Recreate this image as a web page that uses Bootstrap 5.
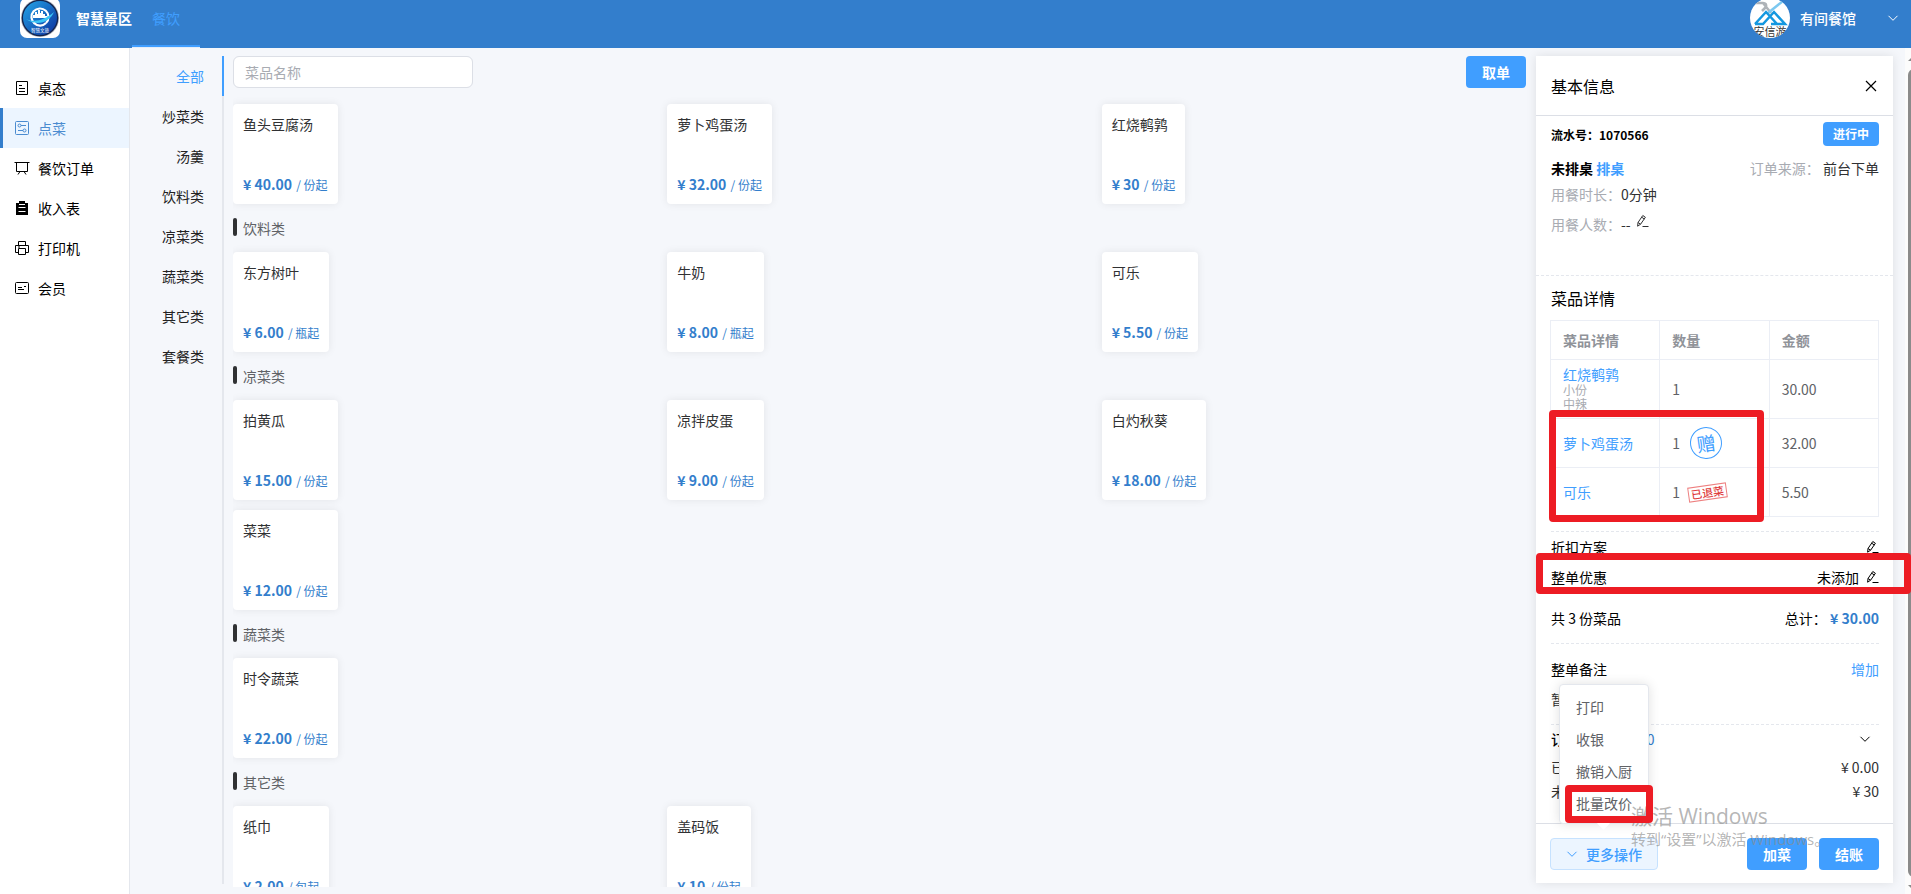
<!DOCTYPE html>
<html lang="zh-CN">
<head>
<meta charset="utf-8">
<meta name="viewport" content="width=device-width, initial-scale=1">
<title>智慧景区 - 点菜</title>
<link href="https://cdn.jsdelivr.net/npm/bootstrap@5.3.0/dist/css/bootstrap.min.css" rel="stylesheet">
<style>
  :root { --brand:#337ecc; --accent:#409eff; --line:#e4e7ed; }
  body { font-family:"Noto Sans CJK SC",sans-serif; font-size:14px; line-height:20px; color:#000; background:#f5f7fb; }
  a { text-decoration:none; color:var(--accent); }
  .topbar { height:48px; background:var(--brand); color:#fff; }
  .topbar-inner { height:36px; }
  .logo { width:40px; height:40px; flex-shrink:0; }
  .shop-name { margin:0 31px 0 10px; }
  .tab-link { width:68px; height:47px; padding-top:8px; border-bottom:2px solid var(--accent); box-shadow:0 1px #e4edf8; color:var(--accent); text-align:center; }
  .workspace { min-height:0; }
  .side { width:130px; background:#fff; border-right:1px solid var(--line); padding-top:20px; }
  .side a { height:40px; color:#000; border-left:3px solid transparent; padding-left:11px; gap:8px; }
  .side a.on { background:#ecf5ff; border-color:var(--brand); color:#4a8bd0; }
  .side svg { width:16px; height:16px; }
  .cats { width:94px; margin:8px 0 10px; border-right:2px solid var(--line); }
  .cats a { height:40px; padding-right:18px; color:#222; }
  .cats a.on { color:var(--accent); border-right:2px solid var(--accent); margin-right:-2px; }
  .menu-area { padding:8px 0 0 9px; min-height:0; }
  .search { width:240px; height:32px; font-size:14px; border-color:#dcdfe6; padding:0 11px; }
  .search::placeholder { color:#a8abb2; }
  .btn-main { background:var(--accent); color:#fff; font-weight:700; font-size:14px; line-height:20px; height:32px; width:60px; padding:0; border:0; border-radius:4px; }
  .dish-grid { display:grid; grid-template-columns:repeat(3,1fr); gap:10px; justify-items:start; }
  .dish { height:100px; padding:10px 10px 9px; background:#fff; border-radius:4px; box-shadow:0 0 8px rgba(0,0,0,.08); color:#303133; }
  .price { color:var(--brand); font-weight:700; }
  .price span { font-size:12px; font-weight:400; margin-left:1px; }
  .dishes { overflow:hidden; padding-top:16px; margin-bottom:7px; }
  .group-title { height:48px; font-size:14px; color:#606266; padding-top:14px; gap:6px; margin:0; font-weight:400; line-height:20px; }
  .group-title::before { content:""; width:4px; height:18px; border-radius:2px; background:#303133; }
  .panel { width:357px; margin:8px 12px 11px 10px; background:#fff; box-shadow:0 0 10px rgba(0,0,0,.1); }
  .panel-head { height:60px; padding:0 15px; border-bottom:1px solid #dcdfe6; }
  .panel-title { font-size:16px; font-weight:400; line-height:24px; margin:0; }
  .dish-title { padding:10px 0; }
  .sect { padding:0 14px 0 15px; }
  .basic { height:160px; padding-top:6px; border-bottom:1px dashed var(--line); color:#303133; }
  .serial { font-size:12px; color:#000; padding-top:2px; }
  .state { width:56px; height:24px; font-size:12px; line-height:24px; background:var(--accent); color:#fff; border-radius:4px; text-align:center; font-weight:700; }
  .source-line { margin-top:12px; }
  .time-line { margin-top:6px; }
  .people-line { margin-top:10px; }
  .muted { color:#a8abb2; }
  .dashed { border-bottom:1px dashed var(--line); }
  .order-wrap { margin-left:-1px; }
  .order-table { width:100%; table-layout:fixed; color:#606266; border-collapse:collapse; height:197px; }
  .order-table th,.order-table td { border:1px solid #ebeef5; padding:0 12px; vertical-align:middle; }
  .order-table th { color:#909399; height:39px; }
  .order-table tbody tr { height:49px; }
  .order-table tbody tr:first-child { height:59px; }
  .order-table .with-spec { padding-bottom:3px; }
  .spec { font-size:12px; line-height:14px; color:#a8abb2; }
  .with-spec a { display:block; line-height:18px; }
  .gift { width:32px; height:32px; margin-left:10px; border:1px solid var(--accent); border-radius:50%; color:var(--accent); font-size:19px; line-height:30px; text-align:center; transform:rotate(-8deg); }
  .returned { margin-left:8px; border:1px solid #ee8080; color:#e03c3c; font-size:11px; font-weight:500; line-height:13px; padding:0 2px; transform:rotate(-8deg); }
  .after-table { height:15px; }
  .row30 { height:30px; }
  .unset { gap:6px; }
  .total-row { height:52px; }
  .note-block { height:81px; padding-top:15px; }
  .note-text { padding-top:10px; color:#303133; }
  .amount { gap:7px; }
  .redbox { position:absolute; border:7px solid #ed1c24; border-radius:4px; z-index:11; pointer-events:none; }
  .redbox.rows { inset:90px 115px -5px -1px; }
  .redbox.discount { inset:-9px -32px -2px -15px; }
  .redbox.reprice { inset:-2px -5px -4px 5px; }
  .panel-foot { height:60px; padding:0 14px; border-top:1px solid #dcdfe6; }
  .btn-more { width:108px; height:32px; padding:0; font-size:14px; line-height:20px; color:var(--accent); background:#ecf5ff; border:1px solid #c6e2ff; border-radius:4px; font-weight:500; }
  .popup { position:absolute; left:9px; bottom:46px; width:90px; padding:6px 0 4px; background:#fff; border:1px solid var(--line); border-radius:4px; box-shadow:0 0 12px rgba(0,0,0,.12); }
  .popup::after { content:""; position:absolute; left:39px; bottom:-5px; width:9px; height:9px; background:#fff; transform:rotate(45deg); }
  .popup button { display:block; position:relative; width:100%; height:32px; background:none; border:0; padding:0 0 0 16px; text-align:left; color:#606266; white-space:nowrap; }
  .watermark { position:absolute; left:95px; bottom:33px; z-index:10; color:rgba(140,140,140,.65); font-family:"Open Sans","Noto Sans CJK SC",sans-serif; font-size:15px; line-height:22px; white-space:nowrap; pointer-events:none; }
  .watermark b { display:block; font-size:21px; font-weight:400; line-height:24px; }
  .scroll { width:6px; background:#fcfcfc; overflow:hidden; padding-left:3px; }
  .scroll i { display:block; background:#8b8b8b; }
  .thumb { flex:1; width:12px; border-radius:6px; }
  .scroll .arrow { width:0; height:0; background:none; border:5px solid transparent; }
  .scroll .up { border-top:0; border-bottom-color:#8b8b8b; }
  .scroll .dn { border-bottom:0; border-top-color:#8b8b8b; }
</style>
</head>
<body>
<svg class="d-none">
  <symbol id="pen" viewBox="0 0 14 14"><path d="M3 8.500 7.800 1.500 10.400 3.300 5.600 10.200 2.600 12.200ZM6.700 3.200 9.300 5M3 8.500 5.600 10.200M7.500 12.500h6" fill="none" stroke="currentColor"/></symbol>
  <symbol id="down" viewBox="0 0 12 12"><path d="m1.500 3.800 4.500 4.500 4.500-4.500" fill="none" stroke="currentColor"/></symbol>
</svg>
<div class="d-flex flex-column vh-100 overflow-hidden">
  <header class="topbar d-flex align-items-start flex-shrink-0">
    <div class="topbar-inner d-flex align-items-center ps-3 ms-1">
      <svg class="logo" viewBox="0 0 40 40" aria-label="智慧文旅">
        <defs><linearGradient id="lg" x2="1" y2="1"><stop stop-color="#24a6e8"/><stop offset="1" stop-color="#0b2f9c"/></linearGradient></defs>
        <rect width="40" height="40" rx="7" fill="#fff"/><circle cx="20" cy="20" r="19" fill="#a9adb5"/><circle cx="20" cy="20" r="18.300" fill="#14244c"/><circle cx="20" cy="20" r="17" fill="url(#lg)"/>
        <path d="M14.500 25.500A8.500 8.500 0 1 1 26 25" fill="none" stroke="#fff" stroke-width="2.200"/>
        <path d="M13 20v-3h2v-3h2v2h1v-4h2v3h1v-2h2v3h2v2h2v2Z" fill="#fff"/>
        <path d="M6 21c8 4 19 1 28-7-4 10-17 15-28 7Z" fill="#3cc5f5"/>
        <path d="M14 25c4 4 9 3 12 0" stroke="#fff" stroke-width="2.200" fill="none"/>
        <text x="20" y="34" font-size="4.500" fill="#fff" text-anchor="middle">智慧文旅</text>
      </svg>
      <strong class="ms-3">智慧景区</strong>
    </div>
    <a href="#" class="tab-link d-block">餐饮</a>
    <div class="topbar-inner d-flex align-items-center ms-auto pe-2 me-1">
      <svg class="logo" viewBox="0 0 40 40" aria-label="安信游">
        <clipPath id="round"><circle cx="20" cy="20" r="20"/></clipPath>
        <g clip-path="url(#round)"><path fill="#fff" d="M0 0h40v40H0z"/><path d="M5 5h8q4 0 3 4l-4 4M13 5l8 10" fill="none" stroke="#aeb3b8" stroke-width="2.500"/><path d="M33 3 18 15" stroke="#7cc8f0" stroke-width="2.500"/><path d="M5 26 16 14 27 26H21M5 26h8L24 14 35 26h-8" fill="none" stroke="#1498e0" stroke-width="2.500"/><text x="20" y="38" font-size="11" fill="#333" text-anchor="middle">安信游</text></g>
      </svg>
      <span class="shop-name fw-medium">有间餐馆</span>
      <svg width="12" height="12"><use href="#down"/></svg>
    </div>
  </header>

  <div class="workspace d-flex flex-grow-1">
    <nav class="side flex-shrink-0">
      <a href="#" class="d-flex align-items-center"><svg viewBox="0 0 16 16" fill="none" stroke="currentColor"><path d="M2.500 1.500h11v13h-11zM5 5.500h3M5 8.500h6M5 11.500h6"/></svg>桌态</a>
      <a href="#" class="on d-flex align-items-center"><svg viewBox="0 0 16 16" fill="none" stroke="currentColor"><rect x="1.500" y="1.500" width="13" height="13" rx="1"/><circle cx="5.500" cy="5.500" r="1.500"/><circle cx="10.500" cy="10.500" r="1.500"/><path d="M7 5.500h5M4 10.500h5"/></svg>点菜</a>
      <a href="#" class="d-flex align-items-center"><svg viewBox="0 0 16 16" fill="none" stroke="currentColor"><path d="M.5 2.500h15M2.500 2.500v9h11v-9M6 11.500l-2 3M10 11.500l2 3"/></svg>餐饮订单</a>
      <a href="#" class="d-flex align-items-center"><svg viewBox="0 0 16 16"><path d="M2 3h3V1h6v2h3v12H2z" fill="currentColor"/><path d="M5 4.500h6M4.500 7.500h7M4.500 11.500h7" stroke="#fff"/></svg>收入表</a>
      <a href="#" class="d-flex align-items-center"><svg viewBox="0 0 16 16" fill="none" stroke="currentColor"><path d="M4.500 5V1.500h7V5M4.500 12.500h-3v-7h13v7h-3M4.500 8.500h7v6h-7zM4 7h2"/></svg>打印机</a>
      <a href="#" class="d-flex align-items-center"><svg viewBox="0 0 16 16" fill="none" stroke="currentColor"><rect x="1.500" y="2.500" width="13" height="11" rx="1"/><path d="M4 7.500h4M4 9.500h6M10 6.500h2"/></svg>会员</a>
    </nav>

    <nav class="cats flex-shrink-0">
      <a href="#" class="on d-flex align-items-center justify-content-end">全部</a>
      <a href="#" class="d-flex align-items-center justify-content-end">炒菜类</a>
      <a href="#" class="d-flex align-items-center justify-content-end">汤羹</a>
      <a href="#" class="d-flex align-items-center justify-content-end">饮料类</a>
      <a href="#" class="d-flex align-items-center justify-content-end">凉菜类</a>
      <a href="#" class="d-flex align-items-center justify-content-end">蔬菜类</a>
      <a href="#" class="d-flex align-items-center justify-content-end">其它类</a>
      <a href="#" class="d-flex align-items-center justify-content-end">套餐类</a>
    </nav>

    <main class="menu-area flex-grow-1 d-flex flex-column">
      <div class="d-flex justify-content-between">
        <input class="form-control search" type="text" placeholder="菜品名称" aria-label="菜品名称">
        <button class="btn-main" type="button">取单</button>
      </div>
      <div class="dishes flex-grow-1">
        <div class="dish-grid">
          <div class="dish d-flex flex-column justify-content-between"><div>鱼头豆腐汤</div><div class="price">¥ 40.00 <span>/ 份起</span></div></div>
          <div class="dish d-flex flex-column justify-content-between"><div>萝卜鸡蛋汤</div><div class="price">¥ 32.00 <span>/ 份起</span></div></div>
          <div class="dish d-flex flex-column justify-content-between"><div>红烧鹌鹑</div><div class="price">¥ 30 <span>/ 份起</span></div></div>
        </div>
        <h2 class="group-title d-flex">饮料类</h2>
        <div class="dish-grid">
          <div class="dish d-flex flex-column justify-content-between"><div>东方树叶</div><div class="price">¥ 6.00 <span>/ 瓶起</span></div></div>
          <div class="dish d-flex flex-column justify-content-between"><div>牛奶</div><div class="price">¥ 8.00 <span>/ 瓶起</span></div></div>
          <div class="dish d-flex flex-column justify-content-between"><div>可乐</div><div class="price">¥ 5.50 <span>/ 份起</span></div></div>
        </div>
        <h2 class="group-title d-flex">凉菜类</h2>
        <div class="dish-grid">
          <div class="dish d-flex flex-column justify-content-between"><div>拍黄瓜</div><div class="price">¥ 15.00 <span>/ 份起</span></div></div>
          <div class="dish d-flex flex-column justify-content-between"><div>凉拌皮蛋</div><div class="price">¥ 9.00 <span>/ 份起</span></div></div>
          <div class="dish d-flex flex-column justify-content-between"><div>白灼秋葵</div><div class="price">¥ 18.00 <span>/ 份起</span></div></div>
          <div class="dish d-flex flex-column justify-content-between"><div>菜菜</div><div class="price">¥ 12.00 <span>/ 份起</span></div></div>
        </div>
        <h2 class="group-title d-flex">蔬菜类</h2>
        <div class="dish-grid">
          <div class="dish d-flex flex-column justify-content-between"><div>时令蔬菜</div><div class="price">¥ 22.00 <span>/ 份起</span></div></div>
        </div>
        <h2 class="group-title d-flex">其它类</h2>
        <div class="dish-grid">
          <div class="dish d-flex flex-column justify-content-between"><div>纸巾</div><div class="price">¥ 2.00 <span>/ 包起</span></div></div>
          <div class="dish d-flex flex-column justify-content-between"><div>盖码饭</div><div class="price">¥ 10 <span>/ 份起</span></div></div>
        </div>
      </div>
    </main>

    <aside class="panel flex-shrink-0 d-flex flex-column position-relative">
      <div class="panel-head d-flex align-items-center justify-content-between">
        <h1 class="panel-title">基本信息</h1>
        <button type="button" class="border-0 bg-transparent p-0 d-flex" aria-label="关闭"><svg width="14" height="14"><path d="m2 2 10 10M12 2 2 12" stroke="#000" stroke-width="1.200"/></svg></button>
      </div>
      <div class="sect basic">
        <div class="d-flex justify-content-between align-items-center"><strong class="serial">流水号：1070566</strong><span class="state">进行中</span></div>
        <div class="source-line d-flex justify-content-between"><strong class="text-black">未排桌 <a href="#">排桌</a></strong><span><span class="muted">订单来源：</span> 前台下单</span></div>
        <div class="time-line"><span class="muted">用餐时长：</span>0分钟</div>
        <div class="people-line d-flex"><span class="muted">用餐人数：</span>--<svg class="ms-1" width="14" height="14"><use href="#pen"/></svg></div>
      </div>
      <div class="sect">
        <h2 class="panel-title dish-title">菜品详情</h2>
        <div class="order-wrap position-relative">
          <table class="order-table">
            <thead><tr><th>菜品详情</th><th>数量</th><th>金额</th></tr></thead>
            <tbody>
              <tr><td class="with-spec"><a href="#">红烧鹌鹑</a><div class="spec">小份<br>中辣</div></td><td>1</td><td>30.00</td></tr>
              <tr><td><a href="#">萝卜鸡蛋汤</a></td><td><div class="d-flex align-items-center">1<span class="gift flex-shrink-0">赠</span></div></td><td>32.00</td></tr>
              <tr><td><a href="#">可乐</a></td><td><div class="d-flex align-items-center">1<span class="returned">已退菜</span></div></td><td>5.50</td></tr>
            </tbody>
          </table>
          <span class="redbox rows"></span>
        </div>
        <div class="after-table dashed"></div>
        <div class="row30 d-flex align-items-center justify-content-between"><span>折扣方案</span><svg width="14" height="14"><use href="#pen"/></svg></div>
        <div class="row30 d-flex align-items-center justify-content-between position-relative"><span>整单优惠</span><span class="unset d-flex align-items-center">未添加<svg width="14" height="14"><use href="#pen"/></svg></span><span class="redbox discount"></span></div>
        <div class="total-row dashed d-flex align-items-center justify-content-between"><span>共 3 份菜品</span><span>总计： <strong class="price">¥ 30.00</strong></span></div>
        <div class="note-block dashed"><div class="d-flex justify-content-between"><span>整单备注</span><a href="#">增加</a></div><div class="note-text">暂无备注</div></div>
        <div class="d-flex align-items-center justify-content-between pt-1"><span class="amount d-flex"><span class="fw-medium">订单金额：</span><span style="color:#337ecc">¥ 30</span></span><svg class="me-2" width="12" height="12"><use href="#down"/></svg></div>
        <div class="d-flex justify-content-between pt-2" style="color:#303133"><span>已收</span><span>¥ 0.00</span></div>
        <div class="d-flex justify-content-between pt-1" style="color:#303133"><span>未收</span><span>¥ 30</span></div>
      </div>
      <div class="panel-foot mt-auto d-flex align-items-center">
        <div class="position-relative me-auto">
          <button type="button" class="btn-more d-flex align-items-center justify-content-center gap-2"><svg width="12" height="12"><use href="#down"/></svg>更多操作</button>
          <div class="popup">
            <button type="button">打印</button><button type="button">收银</button><button type="button">撤销入厨</button><button type="button">批量改价<span class="redbox reprice"></span></button>
          </div>
        </div>
        <button class="btn-main me-2" type="button">加菜</button>
        <button class="btn-main ms-1" type="button">结账</button>
      </div>
      <div class="watermark"><b>激活 Windows</b>转到“设置”以激活 Windows。</div>
    </aside>
    <div class="scroll d-flex flex-column flex-shrink-0 pt-2" aria-hidden="true">
      <i class="arrow up mb-2"></i><i class="thumb mb-2"></i><i class="arrow dn mb-1"></i>
    </div>
  </div>
</div>
<script src="https://cdn.jsdelivr.net/npm/bootstrap@5.3.0/dist/js/bootstrap.bundle.min.js"></script>
</body>
</html>
